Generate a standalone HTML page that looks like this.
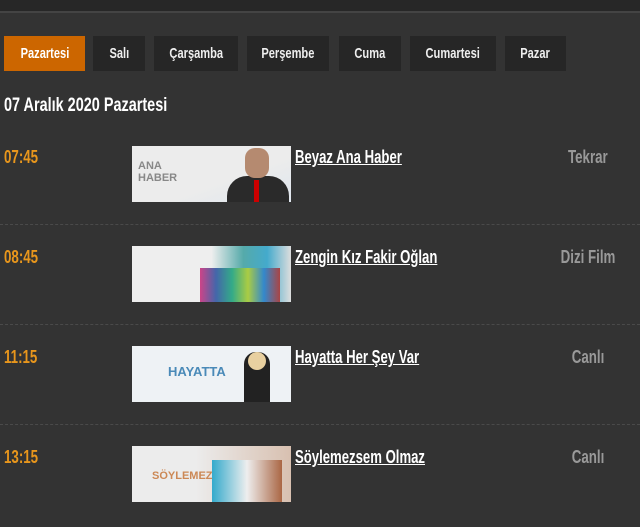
<!DOCTYPE html>
<html><head><meta charset="utf-8"><style>
*{margin:0;padding:0;box-sizing:border-box}
body{width:640px;height:527px;background:#333;overflow:hidden;font-family:"Liberation Sans",sans-serif;color:#fff;position:relative}
.top{position:absolute;left:0;top:0;width:640px;height:13px;background:#272727;border-bottom:2px solid #444}
.tab{position:absolute;top:36px;height:35px;background:#262626;color:#eee;font-size:15px;font-weight:bold;text-align:center;line-height:35px;white-space:nowrap}
.tab span,.lab span{display:inline-block;transform:scaleX(0.74)}
.tab.on{background:#cc6600;color:#fff}
h1{position:absolute;left:4px;top:95px;font-size:19px;font-weight:bold;color:#fff;transform:scaleX(0.76);transform-origin:left;white-space:nowrap}
.time{position:absolute;left:4px;font-size:18px;font-weight:bold;color:#e8961c;transform:scaleX(0.74);transform-origin:left}
.title{position:absolute;left:295px;font-size:18px;font-weight:bold;color:#fff;text-decoration:underline;transform:scaleX(0.73);transform-origin:left;white-space:nowrap}
.lab{position:absolute;left:520px;width:136px;text-align:center;font-size:18px;font-weight:bold;color:#999;white-space:nowrap}
.img{position:absolute;left:132px;width:159px;height:56px;overflow:hidden}
.sep{position:absolute;left:0;width:640px;border-top:1px dashed #4a4a4a}
</style></head><body>
<div class="top"></div>
<div class="tab on" style="left:4px;width:81px"><span>Pazartesi</span></div>
<div class="tab" style="left:93px;width:52px"><span>Salı</span></div>
<div class="tab" style="left:154px;width:84px"><span>Çarşamba</span></div>
<div class="tab" style="left:247px;width:82px"><span>Perşembe</span></div>
<div class="tab" style="left:339px;width:62px"><span>Cuma</span></div>
<div class="tab" style="left:410px;width:86px"><span>Cumartesi</span></div>
<div class="tab" style="left:505px;width:61px"><span>Pazar</span></div>
<h1>07 Aralık 2020 Pazartesi</h1>

<div class="time" style="top:147px">07:45</div>
<div class="img" style="top:146px;background:linear-gradient(160deg,#ececec 60%,#dfe6ee 100%)">
<div style="position:absolute;left:6px;top:14px;color:#888;font:bold 11px 'Liberation Sans';line-height:12px">ANA<br>HABER</div>
<div style="position:absolute;left:95px;top:30px;width:62px;height:30px;background:#2a2a2a;border-radius:20px 20px 0 0"></div>
<div style="position:absolute;left:113px;top:2px;width:24px;height:30px;background:#b58a70;border-radius:10px"></div>
<div style="position:absolute;left:122px;top:34px;width:5px;height:22px;background:#c00"></div>
</div>
<div class="title" style="top:147px">Beyaz Ana Haber</div>
<div class="lab" style="top:147px"><span>Tekrar</span></div>
<div class="sep" style="top:224px"></div>

<div class="time" style="top:247px">08:45</div>
<div class="img" style="top:246px;background:linear-gradient(90deg,#eee 50%,#5aa 70%,#4ac 85%,#ddd 100%)">
<div style="position:absolute;left:68px;top:22px;width:80px;height:34px;background:linear-gradient(90deg,#c48,#46a,#3a8,#ac4,#38c,#a44)"></div>
</div>
<div class="title" style="top:247px">Zengin Kız Fakir Oğlan</div>
<div class="lab" style="top:247px"><span>Dizi Film</span></div>
<div class="sep" style="top:324px"></div>

<div class="time" style="top:347px">11:15</div>
<div class="img" style="top:346px;background:#eef2f5">
<div style="position:absolute;left:36px;top:18px;color:#4a8ab8;font:bold 13px 'Liberation Sans';">HAYATTA</div>
<div style="position:absolute;left:112px;top:6px;width:26px;height:50px;background:#222;border-radius:12px 12px 0 0"></div>
<div style="position:absolute;left:116px;top:6px;width:18px;height:18px;background:#e8d0a0;border-radius:9px"></div>
</div>
<div class="title" style="top:347px">Hayatta Her Şey Var</div>
<div class="lab" style="top:347px"><span>Canlı</span></div>
<div class="sep" style="top:424px"></div>

<div class="time" style="top:447px">13:15</div>
<div class="img" style="top:446px;background:linear-gradient(90deg,#ececec 40%,#d8c0b0 100%)">
<div style="position:absolute;left:20px;top:24px;color:#c85;font:bold 11px 'Liberation Sans';">SÖYLEMEZ</div>
<div style="position:absolute;left:80px;top:14px;width:70px;height:42px;background:linear-gradient(90deg,#3ac,#eee,#a64)"></div>
</div>
<div class="title" style="top:447px">Söylemezsem Olmaz</div>
<div class="lab" style="top:447px"><span>Canlı</span></div>
</body></html>
